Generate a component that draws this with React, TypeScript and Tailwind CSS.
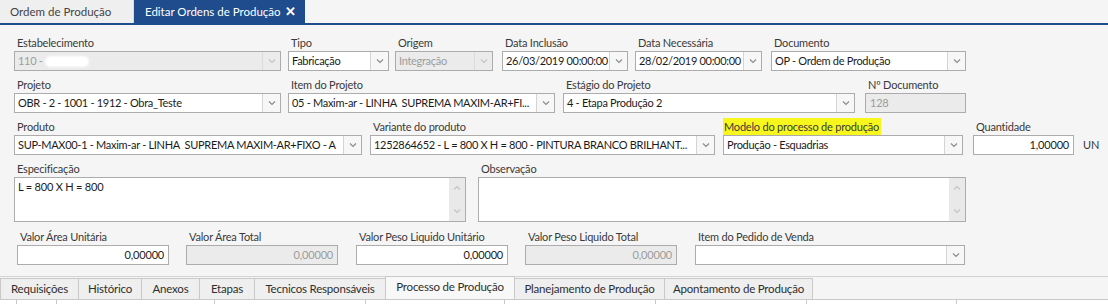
import React from "react";

function Chevron({ up = false, light = false }: { up?: boolean; light?: boolean }) {
  return (
    <svg width="8" height="5" viewBox="0 0 8 5" className="block">
      <polyline
        points={up ? "1,4.5 4,1.5 7,4.5" : "1,0.5 4,3.5 7,0.5"}
        fill="none"
        stroke={light ? "#c4c4c4" : "#8c8c8c"}
        strokeWidth="1.2"
      />
    </svg>
  );
}

function Field({
  label,
  className,
  children,
  highlight = false,
}: {
  label: string;
  className: string;
  children: React.ReactNode;
  highlight?: boolean;
}) {
  return (
    <div className={`flex flex-col ${className}`}>
      <div className="h-[16px] leading-[15px] pl-[3px] text-[#3a3a3a] whitespace-nowrap">
        {highlight ? (
          <span className="bg-[#f7f71e] -ml-[3px] pl-[1px] pr-[2px] py-[2px]">{label}</span>
        ) : (
          label
        )}
      </div>
      {children}
    </div>
  );
}

function Combo({ value, disabled = false, children }: { value?: string; disabled?: boolean; children?: React.ReactNode }) {
  return (
    <div
      className={`flex h-[20px] border border-[#acacac] ${
        disabled ? "bg-[#ebebeb] text-[#9c9c9c]" : "bg-white text-[#1b1b1b]"
      }`}
    >
      <div className="flex-1 min-w-0 flex items-center pl-[3px] pr-[1px] whitespace-pre overflow-hidden tracking-[-0.3px]">
        {value}
        {children}
      </div>
      <div
        className={`w-[18px] shrink-0 border-l flex items-center justify-center ${
          disabled ? "border-[#dcdcdc] bg-[#ebebeb]" : "border-[#d4d4d4] bg-[#f7f7f7]"
        }`}
      >
        <Chevron light={disabled} />
      </div>
    </div>
  );
}

function TextBox({ value, disabled = false, right = false }: { value?: string; disabled?: boolean; right?: boolean }) {
  return (
    <div
      className={`flex items-center h-[20px] border border-[#acacac] px-[4px] whitespace-nowrap ${
        right ? "justify-end" : ""
      } ${disabled ? "bg-[#ebebeb] text-[#9c9c9c]" : "bg-white text-[#1b1b1b]"}`}
    >
      {value}
    </div>
  );
}

function Memo({ value }: { value?: string }) {
  return (
    <div className="flex h-[45px] border border-[#acacac] bg-white">
      <div className="flex-1 px-[3px] pt-[1px] text-[#1b1b1b] leading-[15px]">{value}</div>
      <div className="w-[16px] bg-[#e9e9e9] flex flex-col justify-between items-center py-[7px]">
        <Chevron up light />
        <Chevron light />
      </div>
    </div>
  );
}

const tabsBefore = [
  { label: "Requisições", w: "w-[79px]" },
  { label: "Histórico", w: "w-[64px]" },
  { label: "Anexos", w: "w-[59px]" },
  { label: "Etapas", w: "w-[56px]" },
  { label: "Tecnicos Responsáveis", w: "w-[132px]" },
];

const tabsAfter = [
  { label: "Planejamento de Produção", w: "w-[151px]" },
  { label: "Apontamento de Produção", w: "w-[149px]" },
];

export default function App() {
  return (
    <div className="w-[1108px] h-[304px] overflow-hidden bg-[#f5f5f5] font-['Lato',sans-serif] text-[11px] tracking-[-0.2px]">
      {/* top document tabs */}
      <div className="flex h-[23px] text-[11.5px] whitespace-nowrap tracking-normal">
        <div className="w-[134px] bg-[#efefef] border-r border-[#dadada] flex items-center pl-[10px] text-[#444]">
          Ordem de Produção
        </div>
        <div className="w-[171px] bg-[#1e4c8c] flex items-center justify-between pl-[11px] pr-[9px] text-white">
          <span>Editar Ordens de Produção</span>
          <span className="font-bold text-[13px]">✕</span>
        </div>
      </div>
      <div className="h-[2px] bg-[#1e4c8c]" />

      <div className="pt-[10px]">
        {/* row 1 */}
        <div className="flex">
          <Field label="Estabelecimento" className="ml-[14px] w-[267px]">
            <Combo value="110 - " disabled>
              <span className="inline-block w-[44px] h-[11px] bg-white rounded-full blur-[1px]" />
            </Combo>
          </Field>
          <Field label="Tipo" className="ml-[7px] w-[101px]">
            <Combo value="Fabricação" />
          </Field>
          <Field label="Origem" className="ml-[6px] w-[98px]">
            <Combo value="Integração" disabled />
          </Field>
          <Field label="Data Inclusão" className="ml-[9px] w-[126px]">
            <Combo value="26/03/2019 00:00:00" />
          </Field>
          <Field label="Data Necessária" className="ml-[7px] w-[127px]">
            <Combo value="28/02/2019 00:00:00" />
          </Field>
          <Field label="Documento" className="ml-[9px] w-[195px]">
            <Combo value="OP - Ordem de Produção" />
          </Field>
        </div>

        {/* row 2 */}
        <div className="flex mt-[6px]">
          <Field label="Projeto" className="ml-[14px] w-[267px]">
            <Combo value="OBR - 2 - 1001 - 1912 - Obra_Teste" />
          </Field>
          <Field label="Item do Projeto" className="ml-[7px] w-[267px]">
            <Combo value="05 - Maxim-ar - LINHA  SUPREMA MAXIM-AR+FI..." />
          </Field>
          <Field label="Estágio do Projeto" className="ml-[8px] w-[292px]">
            <Combo value="4 - Etapa Produção 2" />
          </Field>
          <Field label="Nº Documento" className="ml-[10px] w-[101px]">
            <TextBox value="128" disabled />
          </Field>
        </div>

        {/* row 3 */}
        <div className="flex mt-[6px]">
          <Field label="Produto" className="ml-[14px] w-[348px]">
            <Combo value="SUP-MAX00-1 - Maxim-ar - LINHA  SUPREMA MAXIM-AR+FIXO - A" />
          </Field>
          <Field label="Variante do produto" className="ml-[8px] w-[345px]">
            <Combo value="1252864652 - L = 800 X H = 800 - PINTURA BRANCO BRILHANT..." />
          </Field>
          <Field label="Modelo do processo de produção" className="ml-[8px] w-[240px]" highlight>
            <Combo value="Produção - Esquadrias" />
          </Field>
          <Field label="Quantidade" className="ml-[10px] w-[101px]">
            <TextBox value="1,00000" right />
          </Field>
          <div className="ml-[9px] h-[36px] flex flex-col justify-end text-[#3a3a3a]">
            <span className="leading-[20px]">UN</span>
          </div>
        </div>

        {/* row 4 */}
        <div className="flex mt-[6px]">
          <Field label="Especificação" className="ml-[14px] w-[452px]">
            <Memo value="L = 800 X H = 800" />
          </Field>
          <Field label="Observação" className="ml-[12px] w-[488px]">
            <Memo />
          </Field>
        </div>

        {/* row 5 */}
        <div className="flex mt-[7px]">
          <Field label="Valor Área Unitária" className="ml-[17px] w-[152px]">
            <TextBox value="0,00000" right />
          </Field>
          <Field label="Valor Área Total" className="ml-[17px] w-[152px]">
            <TextBox value="0,00000" right disabled />
          </Field>
          <Field label="Valor Peso Liquido Unitário" className="ml-[18px] w-[152px]">
            <TextBox value="0,00000" right />
          </Field>
          <Field label="Valor Peso Liquido Total" className="ml-[17px] w-[152px]">
            <TextBox value="0,00000" right disabled />
          </Field>
          <Field label="Item do Pedido de Venda" className="ml-[18px] w-[270px]">
            <Combo />
          </Field>
        </div>

        {/* bottom tabs */}
        <div className="mt-[11px] border-t border-[#d2d2d2] flex items-start h-[23px] pl-[1px] text-[11.5px]">
          {tabsBefore.map((t) => (
            <div
              key={t.label}
              className={`${t.w} h-[22px] mt-[1px] border border-[#c9c9c9] -ml-[1px] bg-[#efefef] flex items-center justify-center text-[#2e2e2e] whitespace-nowrap`}
            >
              {t.label}
            </div>
          ))}
          <div className="w-[130px] h-[23px] -mt-[1px] -ml-[1px] border border-b-0 border-[#c9c9c9] bg-[#f8f8f8] flex items-center justify-center pb-[2px] text-[#2e2e2e] whitespace-nowrap">
            Processo de Produção
          </div>
          {tabsAfter.map((t) => (
            <div
              key={t.label}
              className={`${t.w} h-[22px] mt-[1px] border border-[#c9c9c9] -ml-[1px] bg-[#efefef] flex items-center justify-center text-[#2e2e2e] whitespace-nowrap`}
            >
              {t.label}
            </div>
          ))}
        </div>
        <div className="flex h-[10px] border-t border-[#c9c9c9] bg-white">
          <div className="w-[17px] border-r border-[#c9c9c9]" />
          <div className="w-[40px] border-r border-[#c9c9c9]" />
          <div className="w-[158px] border-r border-[#c9c9c9]" />
          <div className="w-[151px] border-r border-[#c9c9c9]" />
          <div className="w-[139px] border-r border-[#c9c9c9]" />
          <div className="w-[151px] border-r border-[#c9c9c9]" />
          <div className="w-[151px] border-r border-[#c9c9c9]" />
          <div className="w-[150px] border-r border-[#c9c9c9]" />
          <div className="flex-1" />
        </div>
      </div>
    </div>
  );
}
